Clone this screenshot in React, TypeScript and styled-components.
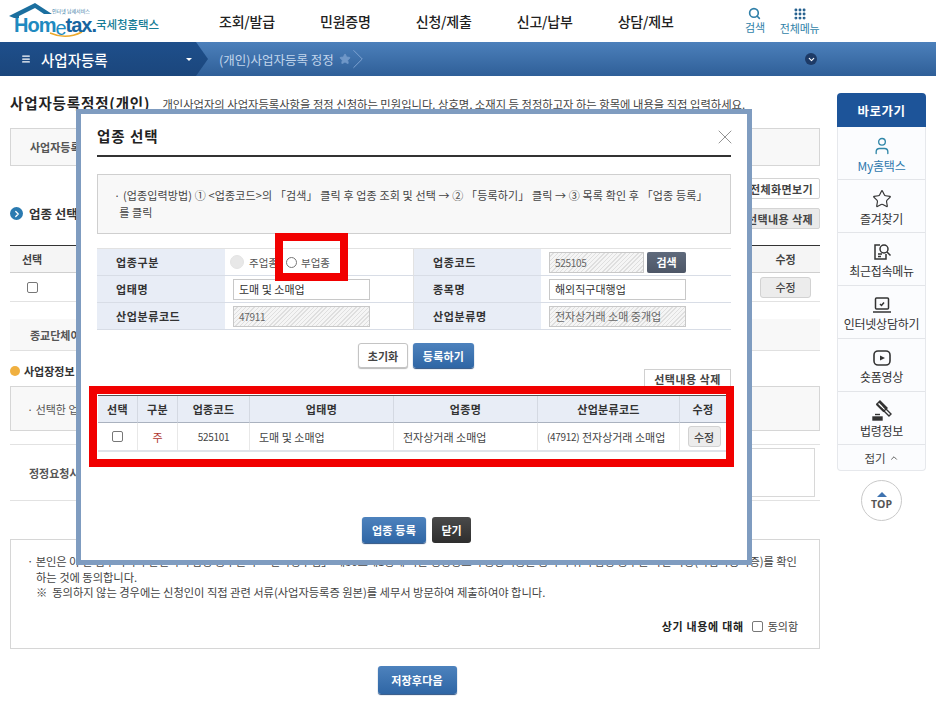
import React from 'react';
import styled, { createGlobalStyle, css } from 'styled-components';
import { Search, Grip, User, Star, X, ChevronDown, ChevronUp, Menu, ChevronRight } from 'lucide-react';

const GlobalStyle = createGlobalStyle`
  html, body {
    margin: 0;
    padding: 0;
    background: #fff;
    overflow: hidden;
  }
  body {
    font-family: "Noto Sans CJK KR", "Noto Sans", sans-serif;
    font-size: 11px;
    color: #333;
  }
  * { box-sizing: border-box; }
`;

const Page = styled.div`
  position: relative;
  width: 936px;
  height: 703px;
  overflow: hidden;
`;

/* top header */
const Header = styled.header`
  height: 42px;
  display: flex;
  align-items: center;
  background: #fff;
`;

const Logo = styled.div`
  position: relative;
  width: 219px;
  height: 42px;
  flex: none;
`;

const LogoRoof = styled.svg`
  position: absolute;
  left: 8px;
  top: 2px;
`;

const LogoTiny = styled.span`
  position: absolute;
  left: 52px;
  top: 7px;
  font-size: 5px;
  line-height: 7px;
  color: #3a7ca5;
`;

const LogoWord = styled.span`
  position: absolute;
  left: 14px;
  top: 13px;
  font-family: "Liberation Sans", Arial, sans-serif;
  font-size: 20px;
  line-height: 24px;
  font-weight: 700;
  letter-spacing: -1px;
  color: #1f8ac0;
`;

const LogoE = styled.span`
  position: relative;
  top: 3px;
  font-weight: 400;
`;

const LogoTax = styled.span`
  color: #17659f;
`;

const LogoKorean = styled.span`
  position: absolute;
  left: 96px;
  top: 16px;
  font-size: 11.5px;
  line-height: 17px;
  font-weight: 500;
  letter-spacing: -0.1px;
  color: #167c96;
`;

const NavList = styled.nav`
  display: flex;
  width: 507px;
  flex: none;
  gap: 45px;
`;

const NavItem = styled.span`
  font-size: 14px;
  font-weight: 500;
  line-height: 20px;
  color: #222;
  white-space: nowrap;
  letter-spacing: -0.2px;
`;

const ToolList = styled.div`
  display: flex;
  margin-left: 19px;
  gap: 15px;
`;

const ToolItem = styled.div`
  display: flex;
  flex-direction: column;
  align-items: center;
  font-size: 11px;
  line-height: 13px;
  letter-spacing: -0.2px;
  color: #2f7fa8;
  svg { display: block; margin-bottom: 1px; }
`;

/* blue location bar */
const LocationBar = styled.div`
  position: relative;
  height: 34px;
  display: flex;
  align-items: center;
  background: linear-gradient(#4c80bb, #2f5f98);
`;

const MenuSegment = styled.div`
  width: 208px;
  height: 34px;
  flex: none;
  display: flex;
  align-items: center;
  padding: 0 16px 0 21px;
  background: linear-gradient(#1e4f8b, #1b467c);
  clip-path: polygon(0 0, 196px 0, 208px 17px, 196px 34px, 0 34px);
  color: #fff;
  font-size: 14.5px;
  font-weight: 500;
  gap: 10px;
`;

const Caret = styled.span`
  margin-left: auto;
  width: 0;
  height: 0;
  border-left: 3px solid transparent;
  border-right: 3px solid transparent;
  border-top: 3px solid #fff;
`;

const Crumb = styled.span`
  margin-left: 11px;
  font-size: 12.5px;
  color: #c3d6ec;
`;

const CrumbStar = styled(Star)`
  margin-left: 5px;
  color: #6f97c8;
  fill: #6f97c8;
`;

const CrumbEdge = styled(ChevronRight)`
  margin-left: -10px;
  color: #7fa3d0;
`;

const ExpandDot = styled.span`
  position: absolute;
  left: 805px;
  top: 11px;
  width: 12px;
  height: 12px;
  border-radius: 50%;
  background: #1d3a66;
  display: flex;
  align-items: center;
  justify-content: center;
  color: #fff;
`;

/* page body */
const Body = styled.div`
  display: flex;
  align-items: flex-start;
`;

const Content = styled.main`
  width: 810px;
  margin-left: 10px;
  flex: none;
`;

const TitleRow = styled.div`
  display: flex;
  align-items: baseline;
  height: 34px;
  padding-top: 17px;
  white-space: nowrap;
`;

const PageTitle = styled.h1`
  margin: 0;
  font-size: 14.5px;
  font-weight: 700;
  color: #222;
  line-height: 20px;
  letter-spacing: 0.85px;
`;

const PageDesc = styled.span`
  margin-left: 12px;
  font-size: 11.3px;
  color: #444;
`;

const ThinBox = styled.div`
  margin-top: 18px;
  height: 38px;
  display: flex;
  align-items: center;
  padding-left: 19px;
  border: 1px solid #d6d6d6;
  background: #f8f8f8;
  font-weight: 700;
  color: #555;
`;

const SectionHead = styled.div`
  display: flex;
  justify-content: flex-end;
  flex-direction: column;
  align-items: flex-end;
  gap: 9px;
  margin-top: 12px;
`;

const PlainBtn = styled.button<{ $gray?: boolean }>`
  height: 21px;
  padding: 0 6px;
  font: inherit;
  font-weight: 700;
  color: #444;
  border: 1px solid #d4d4d4;
  border-radius: 2px;
  background: ${(p) => (p.$gray ? '#eaeaea' : '#fff')};
  white-space: nowrap;
  letter-spacing: 0.4px;
`;

const SectionTitle = styled.div`
  display: flex;
  align-items: center;
  gap: 6px;
  margin-top: -25px;
  font-size: 12.5px;
  font-weight: 700;
  color: #333;
`;

const Bullet = styled.span<{ $color: string; $size: number }>`
  width: ${(p) => p.$size}px;
  height: ${(p) => p.$size}px;
  border-radius: 50%;
  background: ${(p) => p.$color};
  display: inline-flex;
  align-items: center;
  justify-content: center;
  color: #fff;
  flex: none;
`;

const BackTable = styled.div`
  margin-top: 22px;
  display: grid;
  grid-template-columns: 44px 1fr 69px;
  border-top: 1px solid #333;
  border-bottom: 1px solid #e2e2e2;
`;

const BackHead = styled.div`
  height: 27px;
  display: flex;
  align-items: center;
  justify-content: center;
  background: #f5f5f5;
  border-bottom: 1px solid #cfcfcf;
  font-weight: 700;
  color: #444;
`;

const BackCell = styled.div`
  height: 28px;
  display: flex;
  align-items: center;
  justify-content: center;
`;

const SmallBtn = styled.button`
  font: inherit;
  font-weight: 500;
  color: #444;
  border: 1px solid #d2d2d2;
  border-radius: 3px;
  background: #ececec;
`;

const BackEdit = styled(SmallBtn)`
  width: 51px;
  height: 21px;
`;

const Check = styled.input.attrs({ type: 'checkbox' })`
  appearance: none;
  margin: 0;
  width: 11px;
  height: 11px;
  border: 1px solid #777;
  border-radius: 2px;
  background: #fff;
`;

const ReligionRow = styled.div`
  margin-top: 17px;
  height: 32px;
  display: flex;
  align-items: center;
  padding-left: 20px;
  background: #f8f8f8;
  border-bottom: 1px solid #e0e0e0;
  font-weight: 700;
  color: #555;
`;

const SubTitle = styled(SectionTitle)`
  margin-top: 12px;
  font-size: 11px;
  gap: 4px;
`;

const SelectedBox = styled.div`
  margin-top: 7px;
  height: 45px;
  display: flex;
  align-items: center;
  padding-left: 16px;
  background: #f8f8f8;
  border: 1px solid #d6d6d6;
  color: #555;
`;

const ReasonRow = styled.div`
  margin-top: 13px;
  height: 57px;
  display: flex;
  align-items: center;
  justify-content: space-between;
  padding: 0 5px 0 19px;
  border-top: 1px solid #e2e2e2;
  border-bottom: 1px solid #e2e2e2;
  font-weight: 700;
  color: #555;
`;

const ReasonInput = styled.div`
  width: 720px;
  height: 49px;
  border: 1px solid #d8d8d8;
  background: #fff;
`;

const Notice = styled.section`
  margin-top: 38px;
  height: 110px;
  padding: 14px 21px 0 16px;
  border: 1px solid #d6d6d6;
  font-size: 11.3px;
  line-height: 15.5px;
  color: #444;
  letter-spacing: -0.05px;
`;

const NoticeLine = styled.p`
  margin: 0;
  padding-left: 9px;
  white-space: nowrap;
`;

const NoticeFirst = styled(NoticeLine)`
  padding-left: 0;
  letter-spacing: -0.1px;
`;

const AgreeRow = styled.div`
  display: flex;
  justify-content: flex-end;
  align-items: center;
  gap: 5px;
  margin-top: 18px;
  font-size: 11px;
`;

const AgreeText = styled.strong`
  margin-right: 3px;
  color: #222;
  letter-spacing: 0.7px;
`;

const SaveRow = styled.div`
  display: flex;
  justify-content: center;
  margin-top: 17px;
  padding-left: 4px;
`;

const BlueBtn = styled.button`
  height: 26px;
  padding: 0;
  font: inherit;
  font-weight: 700;
  color: #fff;
  border: 0;
  border-radius: 3px;
  background: linear-gradient(#4d82bd, #2f66a5);
  box-shadow: 0 1px 1px #2a4f80;
  letter-spacing: 0.2px;
`;

const SaveBtn = styled(BlueBtn)`
  width: 79px;
  height: 28px;
`;

/* right quick menu */
const Side = styled.aside`
  width: 89px;
  margin: 17px 0 0 17px;
  flex: none;
  display: flex;
  flex-direction: column;
  align-items: center;
`;

const SideHead = styled.div`
  width: 100%;
  height: 34px;
  display: flex;
  align-items: center;
  justify-content: center;
  background: #1d5499;
  border-radius: 4px 4px 0 0;
  color: #fff;
  font-size: 12.5px;
  font-weight: 700;
  letter-spacing: 0.5px;
`;

const SideList = styled.div`
  width: 100%;
  border: 1px solid #e6e8ec;
  border-top: 0;
  border-radius: 0 0 4px 4px;
  background: #fbfcfe;
`;

const SideItem = styled.div<{ $active?: boolean }>`
  height: 53px;
  display: flex;
  flex-direction: column;
  align-items: center;
  justify-content: center;
  gap: 2px;
  padding-top: 2px;
  border-bottom: 1px solid #e3e5e9;
  font-size: 12px;
  line-height: 15px;
  letter-spacing: -0.25px;
  white-space: nowrap;
  color: ${(p) => (p.$active ? '#2f78ad' : '#333')};
  svg { color: ${(p) => (p.$active ? '#2f86a8' : '#333')}; }
`;

const SideFold = styled.div`
  height: 25px;
  display: flex;
  align-items: center;
  justify-content: center;
  gap: 3px;
  font-size: 11.5px;
  color: #444;
`;

const TopBtn = styled.div`
  width: 41px;
  height: 41px;
  margin-top: 9px;
  border: 1px solid #c9c9c9;
  border-radius: 50%;
  background: #fff;
  display: flex;
  flex-direction: column;
  align-items: center;
  justify-content: center;
  font-family: "Open Sans", sans-serif;
  font-size: 10.5px;
  font-weight: 700;
  line-height: 11px;
  color: #555;
`;

const TopArrow = styled.span`
  width: 0;
  height: 0;
  margin-bottom: 2px;
  border-left: 5.5px solid transparent;
  border-right: 5.5px solid transparent;
  border-bottom: 5px solid #3f73b0;
`;

/* modal over the page */
const Modal = styled.div`
  position: absolute;
  left: 76px;
  top: 109px;
  width: 676px;
  height: 456px;
  padding: 0 16px;
  border: 5px solid #7f9cc0;
  background: #fff;
`;

const ModalHead = styled.div`
  height: 43px;
  padding-top: 12px;
  border-bottom: 2px solid #333;
  font-size: 14.5px;
  line-height: 20px;
  font-weight: 700;
  color: #222;
  letter-spacing: 1px;
`;

const CloseIcon = styled(X)`
  position: absolute;
  right: 10px;
  top: 11px;
  color: #777;
`;

const Guide = styled.div`
  margin-top: 17px;
  height: 60px;
  padding: 12px 16px 0 16px;
  border: 1px solid #cfcfcf;
  background: #f8f8f8;
  font-size: 11px;
  line-height: 17px;
  color: #444;
  letter-spacing: 0.14px;
`;

const FormGrid = styled.div`
  margin-top: 14px;
  display: grid;
  grid-template-columns: 128px 189px 127px 190px;
  grid-auto-rows: 27px;
  border-top: 1px solid #e2e2e2;
`;

const FormLabel = styled.div`
  display: flex;
  align-items: center;
  padding-left: 19px;
  background: #e8edf6;
  border-bottom: 1px solid #d8dde6;
  font-weight: 700;
  color: #333;
  letter-spacing: 0.6px;
`;

const FormField = styled.div`
  display: flex;
  align-items: center;
  padding-left: 8px;
  border-bottom: 1px solid #d8dde6;
  border-right: 1px solid #e2e2e2;
  gap: 3px;
  &:nth-child(4n) { border-right: 0; }
`;

const hatch = css`
  background: repeating-linear-gradient(135deg, #f5f5f5 0 2px, #dfdfdf 2px 3px);
  color: #666;
`;

const TextBox = styled.div<{ $readOnly?: boolean; $w: number }>`
  width: ${(p) => p.$w}px;
  height: 21px;
  display: flex;
  align-items: center;
  padding-left: 5px;
  border: 1px solid #c8c8c8;
  background: #fff;
  color: #333;
  ${(p) => p.$readOnly && hatch}
`;

const Digits = styled.span`
  font-size: 10px;
  letter-spacing: -0.3px;
`;

const SearchBtn = styled.button`
  width: 39px;
  height: 21px;
  font: inherit;
  font-weight: 700;
  color: #fff;
  border: 0;
  border-radius: 2px;
  background: linear-gradient(#5f6a7c, #4d5666);
`;

const RadioRow = styled.div`
  display: flex;
  align-items: center;
  margin-left: -3px;
  font-size: 10.5px;
`;

const RadioDot = styled.span<{ $off?: boolean }>`
  width: ${(p) => (p.$off ? 14 : 11)}px;
  height: ${(p) => (p.$off ? 14 : 11)}px;
  border-radius: 50%;
  border: 1px solid ${(p) => (p.$off ? '#e4e4e4' : '#777')};
  background: ${(p) => (p.$off ? '#e8e8e8' : '#fff')};
  margin-right: ${(p) => (p.$off ? 5 : 4)}px;
  flex: none;
`;

const RadioText = styled.span`
  color: #555;
  margin-right: 8px;
  white-space: nowrap;
`;

const FormActions = styled.div`
  margin-top: 13px;
  display: flex;
  justify-content: center;
  gap: 5px;
  padding-left: 4px;
`;

const ResetBtn = styled.button`
  width: 50px;
  height: 25px;
  font: inherit;
  font-weight: 700;
  color: #444;
  border: 1px solid #c4c4c4;
  border-radius: 3px;
  background: #fff;
  box-shadow: 0 1px 1px #bbb;
`;

const RegisterBtn = styled(BlueBtn)`
  width: 61px;
  height: 25px;
`;

const DeleteRow = styled.div`
  display: flex;
  justify-content: flex-end;
  height: 27px;
  padding-top: 1px;
`;

const DeleteBtn = styled.button`
  width: 87px;
  height: 19px;
  padding: 0;
  font: inherit;
  font-weight: 700;
  color: #444;
  border: 1px solid #d0d0d0;
  background: #fff;
  letter-spacing: 0.5px;
`;

const ListTable = styled.div`
  width: 628px;
  margin-left: 1px;
  display: grid;
  grid-template-columns: 40px 40px 72px 144px 144px 142px 46px;
  border-top: 1px solid #555;
  border-bottom: 2px solid #dfe3ea;
`;

const ListHead = styled.div`
  height: 27px;
  display: flex;
  align-items: center;
  justify-content: center;
  background: #e8edf6;
  border-bottom: 1px solid #aab2bf;
  border-right: 1px solid #d4d9e2;
  font-weight: 700;
  color: #333;
  letter-spacing: 0.3px;
  &:nth-child(7) { border-right: 0; }
`;

const ListCell = styled.div<{ $left?: boolean; $red?: boolean }>`
  height: 27px;
  display: flex;
  align-items: center;
  justify-content: ${(p) => (p.$left ? 'flex-start' : 'center')};
  padding-left: ${(p) => (p.$left ? 9 : 0)}px;
  border-right: 1px solid #e8e8e8;
  color: ${(p) => (p.$red ? '#b0352f' : '#444')};
  white-space: nowrap;
  &:nth-child(14) { border-right: 0; }
`;

const ListEdit = styled(SmallBtn)`
  width: 33px;
  height: 21px;
  margin-left: 2px;
  padding: 0;
`;

const ModalActions = styled.div`
  margin-top: 65px;
  display: flex;
  justify-content: center;
  gap: 6px;
  padding-left: 5px;
`;

const EnrollBtn = styled(BlueBtn)`
  width: 64px;
`;

const CloseBtn = styled.button`
  width: 39px;
  height: 26px;
  font: inherit;
  font-weight: 700;
  color: #fff;
  border: 0;
  border-radius: 3px;
  background: linear-gradient(#4a4a4a, #2e2e2e);
`;

/* red annotation frames painted on top of the capture */
const redFrame = css`
  position: absolute;
  border: 8px solid #f10000;
  pointer-events: none;
`;

const RadioMark = styled.div`
  ${redFrame}
  left: 194px;
  top: 119px;
  width: 73px;
  height: 48px;
`;

const TableMark = styled.div`
  ${redFrame}
  left: 8px;
  top: 272px;
  width: 645px;
  height: 81px;
`;

const listHeads = ['선택', '구분', '업종코드', '업태명', '업종명', '산업분류코드', '수정'];

const RecentIcon = () => (
  <svg width="20" height="18" viewBox="0 0 20 18" fill="none" stroke="#333" strokeWidth="1.5">
    <path d="M8 2H3v14h11v-5" />
    <circle cx="12" cy="6" r="4" />
    <path d="M15 9l3.5 3.5M6 11h4M6 13.5h3" />
  </svg>
);

const LaptopIcon = () => (
  <svg width="20" height="18" viewBox="0 0 20 18" fill="none" stroke="#333" strokeWidth="1.5">
    <rect x="3.5" y="2" width="13" height="11" rx="1" />
    <path d="M1 16h18" />
    <path d="M8 8l1.5 1.5L12 6.5" />
  </svg>
);

const ShortsIcon = () => (
  <svg width="20" height="18" viewBox="0 0 20 18" fill="none" stroke="#333" strokeWidth="1.6">
    <rect x="2" y="2" width="16" height="14" rx="4" />
    <path d="M8 6.5l5 2.5-5 2.5z" fill="#333" stroke="none" />
  </svg>
);

const GavelIcon = () => (
  <svg width="22" height="21" viewBox="0 0 22 21" fill="none" stroke="#333" strokeWidth="1.4">
    <path d="M9 1l7 7-3 3-7-7z" fill="#fff" />
    <path d="M8 1.5l7.5 7.5M5.5 4l7.5 7.5" strokeWidth="1.8" />
    <path d="M12 6l8 8-2 2-8-8" />
    <rect x="2" y="17" width="9" height="3" fill="#333" />
    <path d="M4 14.5h5" />
  </svg>
);

const App = () => {
  return (
    <Page>
      <GlobalStyle />
      <Header>
        <Logo>
          <LogoRoof width="90" height="38" viewBox="0 0 90 38">
            <path d="M1 14L27 1l17 11h-8L27 6 11 14z" fill="#1b6f9f" />
            <path d="M1 14h10v2H6z" fill="#1b6f9f" />
            <path d="M42 31q16 7 32-1" fill="none" stroke="#eda92c" strokeWidth="1.5" />
          </LogoRoof>
          <LogoTiny>인터넷 납세서비스</LogoTiny>
          <LogoWord>
            Hom<LogoE>e</LogoE>
            <LogoTax>tax.</LogoTax>
          </LogoWord>
          <LogoKorean>국세청홈택스</LogoKorean>
        </Logo>
        <NavList>
          <NavItem>조회/발급</NavItem>
          <NavItem>민원증명</NavItem>
          <NavItem>신청/제출</NavItem>
          <NavItem>신고/납부</NavItem>
          <NavItem>상담/제보</NavItem>
        </NavList>
        <ToolList>
          <ToolItem>
            <Search size={13} strokeWidth={3} />
            검색
          </ToolItem>
          <ToolItem>
            <Grip size={14} strokeWidth={3} color="#1d5a8a" />
            전체메뉴
          </ToolItem>
        </ToolList>
      </Header>

      <LocationBar>
        <MenuSegment>
          <Menu size={10} strokeWidth={3} />
          사업자등록
          <Caret />
        </MenuSegment>
        <Crumb>(개인)사업자등록 정정</Crumb>
        <CrumbStar size={12} />
        <CrumbEdge size={34} strokeWidth={0.7} />
        <ExpandDot>
          <ChevronDown size={9} strokeWidth={3} />
        </ExpandDot>
      </LocationBar>

      <Body>
        <Content>
          <TitleRow>
            <PageTitle>사업자등록정정(개인)</PageTitle>
            <PageDesc>
              개인사업자의 사업자등록사항을 정정 신청하는 민원입니다. 상호명, 소재지 등 정정하고자 하는 항목에 내용을 직접 입력하세요.
            </PageDesc>
          </TitleRow>
          <ThinBox>사업자등록번호</ThinBox>
          <SectionHead>
            <PlainBtn>전체화면보기</PlainBtn>
            <PlainBtn $gray>선택내용 삭제</PlainBtn>
          </SectionHead>
          <SectionTitle>
            <Bullet $color="#2a7ab0" $size={13}>
              <ChevronRight size={10} strokeWidth={3} />
            </Bullet>
            업종 선택
          </SectionTitle>
          <BackTable>
            <BackHead>선택</BackHead>
            <BackHead>업종코드</BackHead>
            <BackHead>수정</BackHead>
            <BackCell>
              <Check />
            </BackCell>
            <BackCell />
            <BackCell>
              <BackEdit>수정</BackEdit>
            </BackCell>
          </BackTable>
          <ReligionRow>종교단체여부</ReligionRow>
          <SubTitle>
            <Bullet $color="#f0b040" $size={10} />
            사업장정보
          </SubTitle>
          <SelectedBox>· 선택한 업종</SelectedBox>
          <ReasonRow>
            정정요청사유
            <ReasonInput />
          </ReasonRow>
          <Notice>
            <NoticeFirst>
              · 본인은 이 건 업무처리와 관련하여 담당 공무원이 「전자정부법」 제36조제1항에 따른 행정정보의 공동이용을 통하여 위의 담당 공무원 확인 사항(사업자등록증)를 확인
            </NoticeFirst>
            <NoticeLine>하는 것에 동의합니다.</NoticeLine>
            <NoticeLine>※ &nbsp;동의하지 않는 경우에는 신청인이 직접 관련 서류(사업자등록증 원본)를 세무서 방문하여 제출하여야 합니다.</NoticeLine>
            <AgreeRow>
              <AgreeText>상기 내용에 대해</AgreeText>
              <Check />
              동의함
            </AgreeRow>
          </Notice>
          <SaveRow>
            <SaveBtn>저장후다음</SaveBtn>
          </SaveRow>
        </Content>

        <Side>
          <SideHead>바로가기</SideHead>
          <SideList>
            <SideItem $active>
              <User size={20} strokeWidth={1.6} />
              My홈택스
            </SideItem>
            <SideItem>
              <Star size={20} strokeWidth={1.4} />
              즐겨찾기
            </SideItem>
            <SideItem>
              <RecentIcon />
              최근접속메뉴
            </SideItem>
            <SideItem>
              <LaptopIcon />
              인터넷상담하기
            </SideItem>
            <SideItem>
              <ShortsIcon />
              숏폼영상
            </SideItem>
            <SideItem>
              <GavelIcon />
              법령정보
            </SideItem>
            <SideFold>
              접기
              <ChevronUp size={10} />
            </SideFold>
          </SideList>
          <TopBtn>
            <TopArrow />
            TOP
          </TopBtn>
        </Side>
      </Body>

      <Modal>
        <ModalHead>업종 선택</ModalHead>
        <CloseIcon size={24} strokeWidth={0.8} />
        <Guide>
          · (업종입력방법) ① &lt;업종코드&gt;의 「검색」 클릭 후 업종 조회 및 선택 → ② 「등록하기」 클릭 → ③ 목록 확인 후 「업종 등록」
          <br />
          &nbsp;&nbsp;를 클릭
        </Guide>
        <FormGrid>
          <FormLabel>업종구분</FormLabel>
          <FormField>
            <RadioRow>
              <RadioDot $off />
              <RadioText>주업종</RadioText>
              <RadioDot />
              <RadioText>부업종</RadioText>
            </RadioRow>
          </FormField>
          <FormLabel>업종코드</FormLabel>
          <FormField>
            <TextBox $readOnly $w={95}>
              <Digits>525105</Digits>
            </TextBox>
            <SearchBtn>검색</SearchBtn>
          </FormField>
          <FormLabel>업태명</FormLabel>
          <FormField>
            <TextBox $w={137}>도매 및 소매업</TextBox>
          </FormField>
          <FormLabel>종목명</FormLabel>
          <FormField>
            <TextBox $w={137}>해외직구대행업</TextBox>
          </FormField>
          <FormLabel>산업분류코드</FormLabel>
          <FormField>
            <TextBox $readOnly $w={137}>
              <Digits>47911</Digits>
            </TextBox>
          </FormField>
          <FormLabel>산업분류명</FormLabel>
          <FormField>
            <TextBox $readOnly $w={137}>전자상거래 소매 중개업</TextBox>
          </FormField>
        </FormGrid>
        <FormActions>
          <ResetBtn>초기화</ResetBtn>
          <RegisterBtn>등록하기</RegisterBtn>
        </FormActions>
        <DeleteRow>
          <DeleteBtn>선택내용 삭제</DeleteBtn>
        </DeleteRow>
        <ListTable>
          {listHeads.map((h) => (
            <ListHead key={h}>{h}</ListHead>
          ))}
          <ListCell>
            <Check />
          </ListCell>
          <ListCell $red>주</ListCell>
          <ListCell>
            <Digits>525101</Digits>
          </ListCell>
          <ListCell $left>도매 및 소매업</ListCell>
          <ListCell $left>전자상거래 소매업</ListCell>
          <ListCell $left>
            <Digits>(47912)</Digits>&nbsp;전자상거래 소매업
          </ListCell>
          <ListCell>
            <ListEdit>수정</ListEdit>
          </ListCell>
        </ListTable>
        <ModalActions>
          <EnrollBtn>업종 등록</EnrollBtn>
          <CloseBtn>닫기</CloseBtn>
        </ModalActions>
        <RadioMark />
        <TableMark />
      </Modal>
    </Page>
  );
};

export default App;
